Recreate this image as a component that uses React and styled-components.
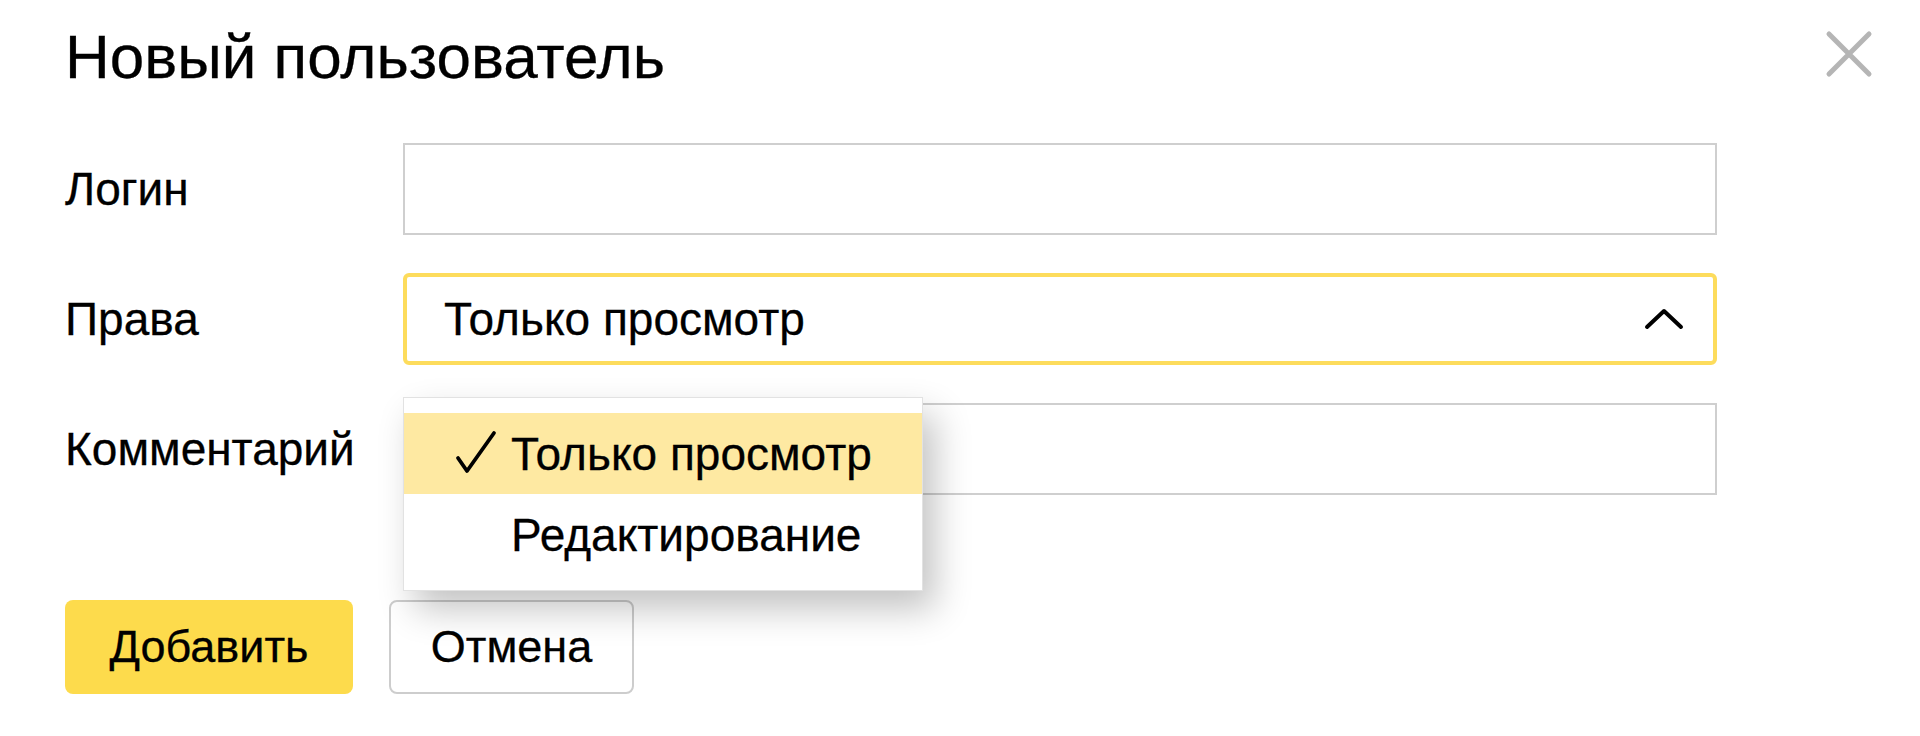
import React from "react";
import styled, { createGlobalStyle } from "styled-components";

const GlobalStyle = createGlobalStyle`
  html, body {
    margin: 0;
    padding: 0;
    background: #fff;
  }
  body {
    font-family: "Liberation Sans", Arial, sans-serif;
    color: #000;
  }
`;

export default function App() {
  return (
    <>
      <GlobalStyle />
      <Dialog>
        <Header>
          <Title>Новый пользователь</Title>
          <CloseButton type="button" aria-label="Закрыть">
            <svg width="48" height="48" viewBox="0 0 48 48">
              <path d="M4 4 L44 44 M44 4 L4 44" stroke="#b5b5b5" strokeWidth="5" strokeLinecap="round" />
            </svg>
          </CloseButton>
        </Header>

        <Form>
          <Row>
            <Label htmlFor="login">Логин</Label>
            <TextInput id="login" type="text" />
          </Row>

          <Row>
            <Label>Права</Label>
            <SelectWrap>
              <Select type="button">
                <span>Только просмотр</span>
                <svg width="40" height="22" viewBox="0 0 40 22">
                  <path d="M3 19 L20 3 L37 19" fill="none" stroke="#000" strokeWidth="4" strokeLinecap="round" strokeLinejoin="round" />
                </svg>
              </Select>
              <Menu>
                <MenuItem $checked>
                  <Check>
                    <svg width="42" height="44" viewBox="0 0 42 44">
                      <path d="M3 28 L12 41 L39 3" fill="none" stroke="#000" strokeWidth="3.8" strokeLinecap="round" strokeLinejoin="round" />
                    </svg>
                  </Check>
                  Только просмотр
                </MenuItem>
                <MenuItem>Редактирование</MenuItem>
              </Menu>
            </SelectWrap>
          </Row>

          <Row>
            <Label htmlFor="comment">Комментарий</Label>
            <TextInput id="comment" type="text" />
          </Row>
        </Form>

        <Actions>
          <Button $primary $width={288}>Добавить</Button>
          <Button $width={245}>Отмена</Button>
        </Actions>
      </Dialog>
    </>
  );
}

const Dialog = styled.div`
  box-sizing: border-box;
  width: 1920px;
  height: 736px;
  padding: 20px 47px 0 65px;
  display: flex;
  flex-direction: column;
`;

const Header = styled.div`
  display: flex;
  justify-content: space-between;
  align-items: flex-start;
`;

const Title = styled.h1`
  margin: 0;
  font-size: 62px;
  line-height: 74px;
  font-weight: 400;
  -webkit-text-stroke: 0.3px #000;
`;

const CloseButton = styled.button`
  margin-top: 10px;
  padding: 0;
  border: none;
  background: none;
  width: 48px;
  height: 48px;
  cursor: pointer;
  svg {
    display: block;
  }
`;

const Form = styled.div`
  margin-top: 49px;
  display: flex;
  flex-direction: column;
  gap: 38px;
`;

const Row = styled.div`
  display: grid;
  grid-template-columns: 338px 1314px;
  align-items: center;
`;

const Label = styled.label`
  font-size: 46px;
  -webkit-text-stroke: 0.3px #000;
`;

const TextInput = styled.input`
  box-sizing: border-box;
  width: 100%;
  height: 92px;
  border: 2px solid #cfcfcf;
  border-radius: 0;
  outline: none;
  padding: 0 37px;
  font-size: 46px;
  font-family: inherit;
  background: #fff;
`;

const SelectWrap = styled.div`
  position: relative;
  z-index: 2;
`;

const Select = styled.button`
  box-sizing: border-box;
  width: 100%;
  height: 92px;
  display: flex;
  align-items: center;
  justify-content: space-between;
  padding: 0 29px 0 37px;
  border: 4px solid #fddc5c;
  border-radius: 6px;
  background: #fff;
  font-family: inherit;
  font-size: 46px;
  color: #000;
  -webkit-text-stroke: 0.3px #000;
  cursor: pointer;
  svg {
    display: block;
  }
`;

const Menu = styled.div`
  position: absolute;
  top: 124px;
  left: 0;
  box-sizing: border-box;
  width: 520px;
  padding: 15px 0;
  background: #fff;
  border: 1px solid #e2e2e2;
  box-shadow: 12px 18px 34px rgba(0, 0, 0, 0.24);
`;

const MenuItem = styled.div`
  position: relative;
  height: 81px;
  display: flex;
  align-items: center;
  padding-left: 107px;
  font-size: 46px;
  -webkit-text-stroke: 0.3px #000;
  background: ${(p) => (p.$checked ? "#fee9a2" : "transparent")};
`;

const Check = styled.span`
  position: absolute;
  left: 51px;
  top: 17px;
  svg {
    display: block;
  }
`;

const Actions = styled.div`
  margin-top: 105px;
  display: flex;
  gap: 36px;
`;

const Button = styled.button`
  box-sizing: border-box;
  width: ${(p) => p.$width}px;
  height: 94px;
  border-radius: 8px;
  border: ${(p) => (p.$primary ? "none" : "2px solid #cdcdcd")};
  background: ${(p) => (p.$primary ? "#fddb4c" : "#fff")};
  font-family: inherit;
  font-size: 45px;
  color: #000;
  -webkit-text-stroke: 0.3px #000;
  cursor: pointer;
`;
